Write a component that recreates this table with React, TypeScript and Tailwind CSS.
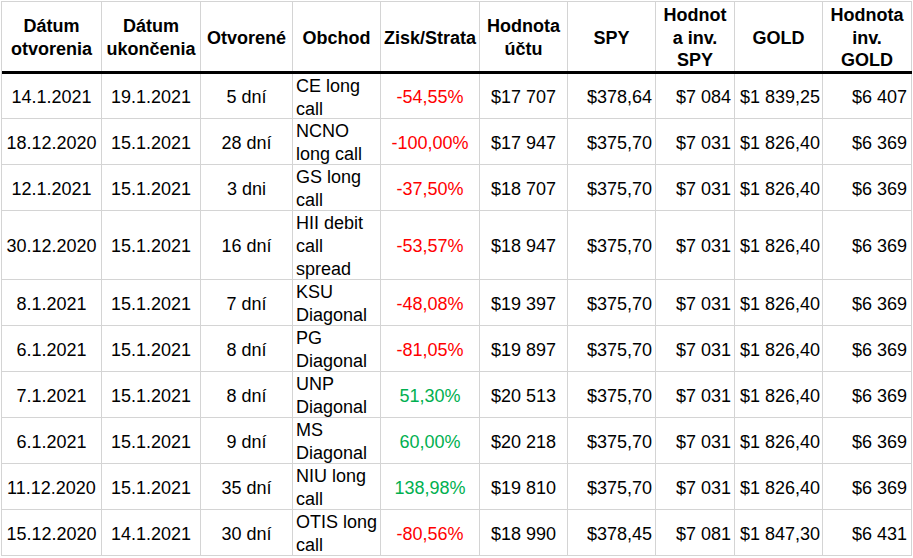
import React from 'react';

type Row = {
  open: string;
  close: string;
  days: string;
  trade: string[];
  pl: string;
  gain: boolean;
  acct: string;
  spy: string;
  spyInv: string;
  gold: string;
  goldInv: string;
  tall?: boolean;
};

const rows: Row[] = [
  { open: '14.1.2021', close: '19.1.2021', days: '5 dní', trade: ['CE long', 'call'], pl: '-54,55%', gain: false, acct: '$17 707', spy: '$378,64', spyInv: '$7 084', gold: '$1 839,25', goldInv: '$6 407' },
  { open: '18.12.2020', close: '15.1.2021', days: '28 dní', trade: ['NCNO', 'long call'], pl: '-100,00%', gain: false, acct: '$17 947', spy: '$375,70', spyInv: '$7 031', gold: '$1 826,40', goldInv: '$6 369' },
  { open: '12.1.2021', close: '15.1.2021', days: '3 dni', trade: ['GS long', 'call'], pl: '-37,50%', gain: false, acct: '$18 707', spy: '$375,70', spyInv: '$7 031', gold: '$1 826,40', goldInv: '$6 369' },
  { open: '30.12.2020', close: '15.1.2021', days: '16 dní', trade: ['HII debit', 'call', 'spread'], pl: '-53,57%', gain: false, acct: '$18 947', spy: '$375,70', spyInv: '$7 031', gold: '$1 826,40', goldInv: '$6 369', tall: true },
  { open: '8.1.2021', close: '15.1.2021', days: '7 dní', trade: ['KSU', 'Diagonal'], pl: '-48,08%', gain: false, acct: '$19 397', spy: '$375,70', spyInv: '$7 031', gold: '$1 826,40', goldInv: '$6 369' },
  { open: '6.1.2021', close: '15.1.2021', days: '8 dní', trade: ['PG', 'Diagonal'], pl: '-81,05%', gain: false, acct: '$19 897', spy: '$375,70', spyInv: '$7 031', gold: '$1 826,40', goldInv: '$6 369' },
  { open: '7.1.2021', close: '15.1.2021', days: '8 dní', trade: ['UNP', 'Diagonal'], pl: '51,30%', gain: true, acct: '$20 513', spy: '$375,70', spyInv: '$7 031', gold: '$1 826,40', goldInv: '$6 369' },
  { open: '6.1.2021', close: '15.1.2021', days: '9 dní', trade: ['MS', 'Diagonal'], pl: '60,00%', gain: true, acct: '$20 218', spy: '$375,70', spyInv: '$7 031', gold: '$1 826,40', goldInv: '$6 369' },
  { open: '11.12.2020', close: '15.1.2021', days: '35 dní', trade: ['NIU long', 'call'], pl: '138,98%', gain: true, acct: '$19 810', spy: '$375,70', spyInv: '$7 031', gold: '$1 826,40', goldInv: '$6 369' },
  { open: '15.12.2020', close: '14.1.2021', days: '30 dní', trade: ['OTIS long', 'call'], pl: '-80,56%', gain: false, acct: '$18 990', spy: '$378,45', spyInv: '$7 081', gold: '$1 847,30', goldInv: '$6 431' },
];

const headers: string[][] = [
  ['Dátum', 'otvorenia'],
  ['Dátum', 'ukončenia'],
  ['Otvorené'],
  ['Obchod'],
  ['Zisk/Strata'],
  ['Hodnota', 'účtu'],
  ['SPY'],
  ['Hodnot', 'a inv.', 'SPY'],
  ['GOLD'],
  ['Hodnota', 'inv.', 'GOLD'],
];

const gridCols = 'grid grid-cols-[100px_99px_92px_88px_99px_88px_88px_79px_88px_89px]';

function Lines({ lines }: { lines: string[] }) {
  return (
    <div className="flex flex-col">
      {lines.map((l, i) => (
        <span key={i} className="whitespace-nowrap">
          {l}
        </span>
      ))}
    </div>
  );
}

export default function App() {
  return (
    <div className="w-[913px] h-[558px] bg-white pl-[1px] pt-[1px] font-['Liberation_Sans',Arial,sans-serif] text-[18px] leading-[22.7px] text-black overflow-hidden">
      <div className="w-fit border-l border-t border-[#d4d4d4]">
        <div className={gridCols}>
          {headers.map((h, i) => (
            <div
              key={i}
              className="h-[69px] pt-[3px] border-r border-[#d4d4d4] flex items-center justify-center text-center font-bold"
            >
              <Lines lines={h} />
            </div>
          ))}
        </div>
        <div className="h-[3px] bg-black" />
        <div className={gridCols}>
          {rows.map((r, ri) => {
            const h = r.tall ? 'h-[69px]' : ri === 0 ? 'h-[45px]' : 'h-[46px]';
            const base = `${h} pt-[3px] border-r border-b border-[#d4d4d4] flex items-center`;
            return (
              <React.Fragment key={ri}>
                <div className={`${base} justify-center`}>{r.open}</div>
                <div className={`${base} justify-center`}>{r.close}</div>
                <div className={`${base} justify-center`}>{r.days}</div>
                <div className={`${base} justify-start pl-[3px]`}>
                  <Lines lines={r.trade} />
                </div>
                <div className={`${base} justify-center ${r.gain ? 'text-[#00b050]' : 'text-[#ff0000]'}`}>{r.pl}</div>
                <div className={`${base} justify-center`}>{r.acct}</div>
                <div className={`${base} justify-end pr-[3px]`}>{r.spy}</div>
                <div className={`${base} justify-end pr-[3px]`}>{r.spyInv}</div>
                <div className={`${base} justify-end pr-[2px] whitespace-nowrap`}>{r.gold}</div>
                <div className={`${base} justify-end pr-[4px]`}>{r.goldInv}</div>
              </React.Fragment>
            );
          })}
        </div>
      </div>
    </div>
  );
}
